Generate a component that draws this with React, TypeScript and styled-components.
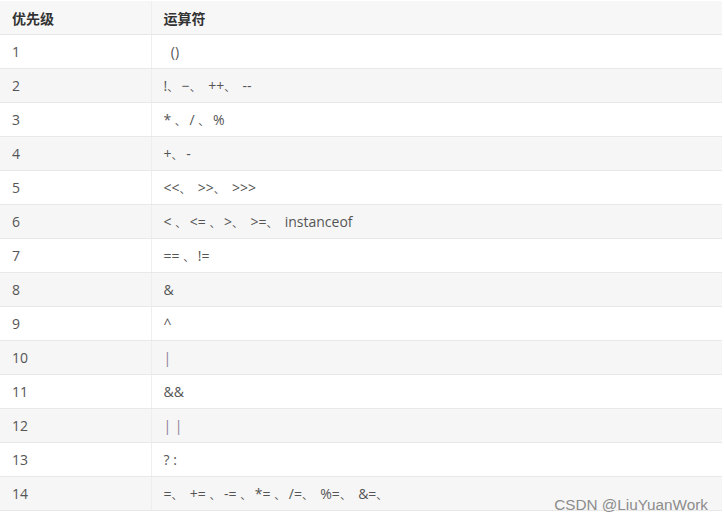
import React from "react";
import styled, { createGlobalStyle } from "styled-components";

const GlobalStyle = createGlobalStyle`
  html, body { margin: 0; padding: 0; background: #ffffff; }
  body { font-family: "Open Sans", "Noto Sans CJK SC", sans-serif; }
`;

const Page = styled.div`
  position: relative;
  width: 724px;
  height: 521px;
  padding-top: 1px;
  box-sizing: border-box;
  background: #ffffff;
  overflow: hidden;
`;

const Table = styled.table`
  width: 722px;
  border-collapse: collapse;
  table-layout: fixed;
  font-size: 14px;
  color: #555555;
`;

const HeadCell = styled.th`
  height: 33px;
  padding: 0 12px;
  text-align: left;
  font-weight: 700;
  font-size: 14px;
  color: #333333;
  background: #f7f7f7;
  border-bottom: 1px solid #e6e6e6;
  border-left: 1px solid #eeeeee;
  &:first-child { border-left: none; }
`;

const Row = styled.tr<{ $striped: boolean }>`
  background: ${(p) => (p.$striped ? "#f6f6f6" : "#ffffff")};
`;

const Cell = styled.td`
  height: 33px;
  padding: 0 12px;
  border-bottom: 1px solid #e8e8e8;
  border-left: 1px solid #eeeeee;
  white-space: pre;
  &:first-child { border-left: none; }
`;

const Sep = styled.span`
  font-size: 11px;
`;

const Pipe = styled.span`
  color: #8c8096;
`;

const Watermark = styled.div`
  position: absolute;
  right: 16px;
  bottom: 7px;
  font-family: "Liberation Sans", Arial, sans-serif;
  font-size: 15.3px;
  color: #8c8c8c;
`;

function Ops({ text }: { text: string }) {
  const parts = text.split("、");
  return (
    <>
      {parts.map((p, i) => (
        <React.Fragment key={i}>
          {p}
          {i < parts.length - 1 && <Sep>、</Sep>}
        </React.Fragment>
      ))}
    </>
  );
}

type Item = { level: number; op: string; pipe?: boolean };

const rows: Item[] = [
  { level: 1, op: "  ()" },
  { level: 2, op: "!、 −、  ++、  --" },
  { level: 3, op: "* 、 / 、 %" },
  { level: 4, op: "+、 -" },
  { level: 5, op: "<<、  >>、  >>>" },
  { level: 6, op: "< 、 <= 、 >、  >=、  instanceof" },
  { level: 7, op: "== 、 !=" },
  { level: 8, op: "&" },
  { level: 9, op: "^" },
  { level: 10, op: "|", pipe: true },
  { level: 11, op: "&&" },
  { level: 12, op: "| |", pipe: true },
  { level: 13, op: "? :" },
  { level: 14, op: "=、  += 、 -= 、 *= 、 /=、  %=、  &=、" },
];

export default function App() {
  return (
    <>
      <GlobalStyle />
      <Page>
        <Table>
          <colgroup>
            <col style={{ width: 151 }} />
            <col />
          </colgroup>
          <thead>
            <tr>
              <HeadCell>优先级</HeadCell>
              <HeadCell>运算符</HeadCell>
            </tr>
          </thead>
          <tbody>
            {rows.map((r, i) => (
              <Row key={r.level} $striped={i % 2 === 1}>
                <Cell>{r.level}</Cell>
                <Cell>{r.pipe ? <Pipe>{r.op}</Pipe> : <Ops text={r.op} />}</Cell>
              </Row>
            ))}
          </tbody>
        </Table>
        <Watermark>CSDN @LiuYuanWork</Watermark>
      </Page>
    </>
  );
}
